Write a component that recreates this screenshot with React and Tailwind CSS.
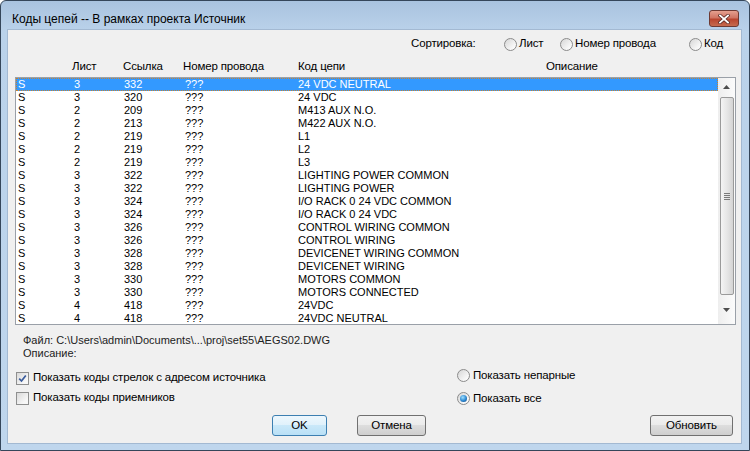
import React from "react";

const rows = [
  ["3", "332", "24 VDC NEUTRAL"],
  ["3", "320", "24 VDC"],
  ["2", "209", "M413 AUX N.O."],
  ["2", "213", "M422 AUX N.O."],
  ["2", "219", "L1"],
  ["2", "219", "L2"],
  ["2", "219", "L3"],
  ["3", "322", "LIGHTING POWER COMMON"],
  ["3", "322", "LIGHTING POWER"],
  ["3", "324", "I/O RACK 0 24 VDC COMMON"],
  ["3", "324", "I/O RACK 0 24 VDC"],
  ["3", "326", "CONTROL WIRING COMMON"],
  ["3", "326", "CONTROL WIRING"],
  ["3", "328", "DEVICENET WIRING COMMON"],
  ["3", "328", "DEVICENET WIRING"],
  ["3", "330", "MOTORS COMMON"],
  ["3", "330", "MOTORS CONNECTED"],
  ["4", "418", "24VDC"],
  ["4", "418", "24VDC NEUTRAL"],
];

function Radio({ checked }) {
  return (
    <span className="flex h-[13px] w-[13px] shrink-0 items-center justify-center rounded-full border border-[#8b8b8b] bg-[linear-gradient(135deg,#d6d6d6,#f6f6f6_70%,#ffffff)]">
      {checked && (
        <span className="h-[7px] w-[7px] rounded-full bg-[radial-gradient(circle_at_40%_35%,#9fe0ff,#2b86d0_55%,#0c3f78)]" />
      )}
    </span>
  );
}

function Check({ checked }) {
  return (
    <span className="flex h-[13px] w-[13px] shrink-0 items-center justify-center border border-[#8e8f8f] bg-[linear-gradient(135deg,#d9d9d9,#f7f7f7_75%)]">
      {checked && (
        <svg width="9" height="9" viewBox="0 0 9 9">
          <path d="M1.2 4.6 L3.5 7 L7.8 1.4" stroke="#3a5c9c" strokeWidth="1.7" fill="none" />
        </svg>
      )}
    </span>
  );
}

function Btn({ children, def, className }) {
  return (
    <div
      className={
        "flex h-[21px] items-center justify-center rounded-[3px] border text-black " +
        (def
          ? "border-[#3c7fb1] bg-[linear-gradient(#edf7fd,#dff1fb_50%,#c9e8f9_50%,#b9e0f6)] "
          : "border-[#707070] bg-[linear-gradient(#f2f2f2,#ebebeb_50%,#dddddd_50%,#cfcfcf)] ") +
        className
      }
    >
      {children}
    </div>
  );
}

function CloseIcon() {
  return (
    <svg width="12" height="10" viewBox="0 0 12 10">
      <path d="M2 1.5 L10 8.5 M10 1.5 L2 8.5" stroke="#5a2a25" strokeWidth="3.4" strokeLinecap="square" />
      <path d="M2 1.5 L10 8.5 M10 1.5 L2 8.5" stroke="#ffffff" strokeWidth="1.8" strokeLinecap="square" />
    </svg>
  );
}

export default function App() {
  return (
    <div className="h-[451px] w-[750px] bg-white font-['Liberation_Sans',Arial,sans-serif] text-[11.5px] tracking-[-0.15px] text-black">
      <div className="flex h-[451px] w-[750px] flex-col rounded-t-[6px] border border-[#35465a] bg-[linear-gradient(#a9c3df,#bad2ea_30px,#bfd6ed)]">
        {/* title bar */}
        <div className="flex h-[28px] shrink-0 items-start justify-between">
          <div className="pl-[11px] pt-[10px] text-[12px] leading-[16px] tracking-normal text-black">
            Коды цепей -- В рамках проекта Источник
          </div>
          <div className="mr-[10px] mt-[9px] flex h-[17px] w-[30px] items-center justify-center rounded-[3px] border border-[#6e3a33] bg-[linear-gradient(#e5a08f,#d07563_45%,#b9452f_55%,#c66b4f)]">
            <CloseIcon />
          </div>
        </div>

        {/* client */}
        <div className="ml-[6px] flex h-[415px] w-[735px] flex-col border border-[#a3b9d2] bg-[#f0f0f0]">
          {/* sort row */}
          <div className="mt-[6px] flex h-[16px] items-center pl-[403px]">
            <span className="w-[93px]">Сортировка:</span>
            <span className="flex w-[56px] items-center gap-[2px]">
              <Radio />
              <span>Лист</span>
            </span>
            <span className="flex w-[129px] items-center gap-[2px]">
              <Radio />
              <span>Номер провода</span>
            </span>
            <span className="flex items-center gap-[2px]">
              <Radio />
              <span>Код</span>
            </span>
          </div>

          {/* headers */}
          <div className="mt-[6px] grid h-[14px] grid-cols-[54px_51px_60px_115px_248px_1fr] items-center pl-[10px]">
            <span />
            <span>Лист</span>
            <span>Ссылка</span>
            <span>Номер провода</span>
            <span>Код цепи</span>
            <span>Описание</span>
          </div>

          {/* list */}
          <div className="ml-[7px] mt-[5px] flex h-[248px] w-[721px] border border-[#9aa0a8] bg-white text-[11px] tracking-normal">
            <div className="flex-1">
              {rows.map((r, i) => (
                <div
                  key={i}
                  className={
                    "grid h-[13px] grid-cols-[56px_50px_61px_113px_1fr] items-center pl-[2px] leading-[13px] " +
                    (i === 0
                      ? "bg-[#3399ff] text-white outline-1 -outline-offset-1 outline-dotted outline-[#c8822e]"
                      : "text-black")
                  }
                >
                  <span>S</span>
                  <span>{r[0]}</span>
                  <span>{r[1]}</span>
                  <span>???</span>
                  <span>{r[2]}</span>
                </div>
              ))}
            </div>
            {/* scrollbar */}
            <div className="flex w-[17px] flex-col items-center bg-[linear-gradient(90deg,#eeeeee,#fbfbfb)]">
              <div className="flex h-[17px] w-full items-center justify-center">
                <svg width="7" height="4" viewBox="0 0 7 4">
                  <path d="M0 4 L3.5 0 L7 4 Z" fill="#4d4d4d" />
                </svg>
              </div>
              <div className="mt-[2px] flex h-[198px] w-[14px] items-center justify-center rounded-[2px] border border-[#9a9a9a] bg-[linear-gradient(90deg,#f4f4f4,#e6e6e6_50%,#d4d4d4)]">
                <div className="flex flex-col gap-[1px]">
                  <span className="h-[1px] w-[6px] bg-[#7a7a7a]" />
                  <span className="h-[1px] w-[6px] bg-[#7a7a7a]" />
                  <span className="h-[1px] w-[6px] bg-[#7a7a7a]" />
                  <span className="h-[1px] w-[6px] bg-[#7a7a7a]" />
                </div>
              </div>
              <div className="flex flex-1 items-center justify-center">
                <svg width="7" height="4" viewBox="0 0 7 4">
                  <path d="M0 0 L3.5 4 L7 0 Z" fill="#4d4d4d" />
                </svg>
              </div>
            </div>
          </div>

          {/* file info */}
          <div className="mt-[8px] h-[14px] pl-[15px] text-[11px] leading-[14px] tracking-normal text-[#222]">
            Файл: C:\Users\admin\Documents\...\proj\set55\AEGS02.DWG
          </div>
          <div className="h-[13px] pl-[15px] text-[11px] leading-[13px] tracking-normal text-[#222]">Описание:</div>

          {/* options */}
          <div className="mt-[8px] flex h-[40px]">
            <div className="flex w-[449px] flex-col pl-[8px]">
              <div className="flex h-[20px] items-center gap-[4px]">
                <Check checked />
                <span>Показать коды стрелок с адресом источника</span>
              </div>
              <div className="flex h-[20px] items-center gap-[4px]">
                <Check />
                <span>Показать коды приемников</span>
              </div>
            </div>
            <div className="-mt-[2px] flex flex-col gap-[4px]">
              <div className="flex h-[20px] items-center gap-[3px]">
                <Radio />
                <span>Показать непарные</span>
              </div>
              <div className="flex h-[20px] items-center gap-[3px]">
                <Radio checked />
                <span>Показать все</span>
              </div>
            </div>
          </div>

          {/* buttons */}
          <div className="mt-[7px] flex">
            <Btn def className="ml-[264px] w-[55px]">OK</Btn>
            <Btn className="ml-[30px] w-[69px]">Отмена</Btn>
            <Btn className="ml-[224px] w-[83px]">Обновить</Btn>
          </div>
        </div>
      </div>
    </div>
  );
}
